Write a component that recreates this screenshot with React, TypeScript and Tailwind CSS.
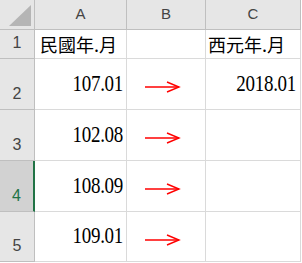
import React from "react";

const rows = [
  { n: "1", a: "民國年.月", c: "西元年.月", h: "h-[29px]", head: true },
  { n: "2", a: "107.01", c: "2018.01", h: "h-[51px]" },
  { n: "3", a: "102.08", c: "", h: "h-[51px]" },
  { n: "4", a: "108.09", c: "", h: "h-[51px]", sel: true },
  { n: "5", a: "109.01", c: "", h: "h-[50px]" },
];

const Arrow = () => (
  <svg width="36" height="12" viewBox="0 0 36 12" className="mt-[6px] ml-[18px]">
    <line x1="0" y1="6" x2="34" y2="6" stroke="#ff0000" strokeWidth="1.4" />
    <polyline points="22,1 34,6 22,11" fill="none" stroke="#ff0000" strokeWidth="1.4" />
  </svg>
);

const cjk = { fontFamily: '"Noto Sans CJK TC", "Noto Sans", sans-serif' };

export default function App() {
  return (
    <div className="w-[302px] h-[263px] bg-white overflow-hidden" style={{ fontFamily: '"Liberation Sans", Arial, sans-serif' }}>
      <div className="grid grid-cols-[35px_92px_79px_95px]">
        {/* header row */}
        <div className="h-[30px] bg-[#e6e6e6] border-r border-b border-[#bfbfbf] flex items-end justify-end pr-[3px] pb-[3px]">
          <svg width="22" height="21" viewBox="0 0 22 21">
            <polygon points="0,21 22,21 22,0" fill="#b5b5b5" />
          </svg>
        </div>
        {["A", "B", "C"].map((l) => (
          <div
            key={l}
            className="h-[30px] bg-[#e6e6e6] border-r border-b border-[#bfbfbf] flex items-center justify-center text-[15px] text-[#444]"
          >
            {l}
          </div>
        ))}

        {rows.map((r) => (
          <React.Fragment key={r.n}>
            <div
              className={`${r.h} border-b flex items-end justify-center pb-[3px] text-[16px] ${
                r.sel
                  ? "bg-[#d2d2d2] text-[#217346] border-r-2 border-r-[#217346] border-b-[#bfbfbf]"
                  : "bg-[#e6e6e6] text-[#444] border-r border-[#bfbfbf]"
              }`}
            >
              {r.n}
            </div>
            <div
              className={`${r.h} border-r border-b border-[#dadada] flex items-center ${
                r.head ? "justify-start pl-[5px] text-[18px]" : "justify-end pr-[3px] text-[19px]"
              } text-black`}
              style={r.head ? cjk : { fontFamily: '"Liberation Serif", "Times New Roman", serif' }}
            >
              <span className={r.head ? "" : "inline-block scale-y-[1.2] tracking-[-0.3px]"}>{r.a}</span>
            </div>
            <div className={`${r.h} border-r border-b border-[#dadada] flex items-center`}>
              {!r.head && <Arrow />}
            </div>
            <div
              className={`${r.h} border-r border-b border-[#dadada] flex items-center ${
                r.head ? "justify-start pl-[2px] text-[18px]" : "justify-end pr-[4px] text-[19px]"
              } text-black`}
              style={r.head ? cjk : { fontFamily: '"Liberation Serif", "Times New Roman", serif' }}
            >
              <span className={r.head ? "" : "inline-block scale-y-[1.2] tracking-[-0.3px]"}>{r.c}</span>
            </div>
          </React.Fragment>
        ))}
      </div>
    </div>
  );
}
